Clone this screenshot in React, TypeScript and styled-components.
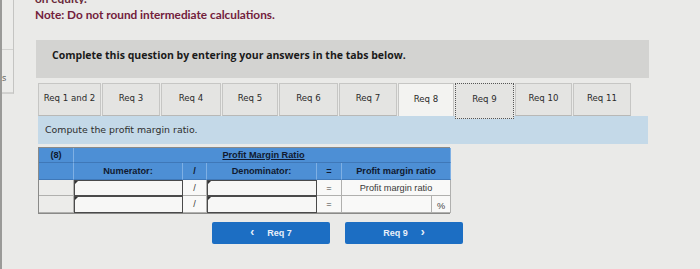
import React from 'react';
import styled, { createGlobalStyle } from 'styled-components';

const GlobalStyle = createGlobalStyle`
  html, body {
    margin: 0;
    padding: 0;
    background: #e9e9e7;
  }
`;

const Page = styled.div`
  display: flex;
  width: 700px;
  height: 269px;
  overflow: hidden;
  background: #eaeae8;
  font-family: "Open Sans", "Liberation Sans", sans-serif;
`;

const Sidebar = styled.div`
  width: 12px;
  flex: none;
  border-left: 2px solid #9a9a98;
  display: flex;
  flex-direction: column;
`;

const SidePanel = styled.div`
  height: 93px;
  border-right: 1px solid #c4c4c2;
  border-bottom: 1px solid #d0d0ce;
  background: #ececea;
  display: flex;
  flex-direction: column;
`;

const SideCell = styled.div<{ $h: number }>`
  height: ${({ $h }) => $h}px;
  border-bottom: 1px solid #d2d2d0;
  font-size: 9px;
  color: #555;
  display: flex;
  align-items: flex-end;
  padding-bottom: 8px;
  box-sizing: border-box;
`;

const Main = styled.div`
  flex: 1;
  padding-left: 21px;
  display: flex;
  flex-direction: column;
`;

const CutLine = styled.div`
  height: 4px;
  overflow: hidden;
  font-family: Lato, sans-serif;
  font-weight: 700;
  font-size: 11.8px;
  color: #6a2a3a;
  line-height: 4px;
  span {
    display: block;
    margin-top: -3px;
  }
`;

const Note = styled.div`
  margin-top: 4px;
  font-family: Lato, sans-serif;
  font-weight: 700;
  font-size: 11.8px;
  color: #72203b;
  line-height: 14px;
`;

const Instruction = styled.div`
  margin-top: 18px;
  margin-left: 1px;
  width: 613px;
  height: 38px;
  background: #d3d3d1;
  box-sizing: border-box;
  padding-left: 16px;
  display: flex;
  align-items: center;
  font-family: "Open Sans", sans-serif;
  font-weight: 700;
  font-size: 10.5px;
  color: #1a1a1a;
  padding-bottom: 9px;
`;

const TabPanel = styled.div`
  margin-top: 5px;
  margin-left: 3px;
  width: 610px;
`;

const TabRow = styled.div`
  display: flex;
  height: 33px;
  align-items: flex-start;
`;

const Tab = styled.div<{ $w: number; $active?: boolean; $focus?: boolean }>`
  width: ${({ $w }) => $w}px;
  height: ${({ $focus }) => ($focus ? 36 : 33)}px;
  box-sizing: border-box;
  margin-right: 1px;
  background: ${({ $active }) => ($active ? '#f3f3f1' : '#e4e4e2')};
  border: ${({ $focus }) => ($focus ? '1px dotted #555' : '1px solid #c6c6c4')};
  border-bottom: ${({ $active, $focus }) =>
    $active ? 'none' : $focus ? '1px dotted #555' : '1px solid #b8b8b6'};
  display: flex;
  align-items: center;
  justify-content: center;
  padding-bottom: ${({ $focus }) => ($focus ? 5 : 3)}px;
  font-family: "DejaVu Sans", Verdana, sans-serif;
  font-size: 8.6px;
  color: #2a2a2a;
  position: relative;
  z-index: ${({ $focus }) => ($focus ? 2 : 1)};
`;

const Prompt = styled.div`
  height: 28px;
  background: #c4d9e8;
  display: flex;
  align-items: center;
  padding-left: 7px;
  font-family: "DejaVu Sans", Verdana, sans-serif;
  font-size: 9.4px;
  color: #2e2e2e;
  padding-bottom: 1px;
  box-sizing: border-box;
`;

const Table = styled.div`
  margin-top: 3px;
  margin-left: 3px;
  width: 412px;
  display: grid;
  grid-template-columns: 35px 109px 24px 110px 25px 109px;
  grid-template-rows: 15px 17px 16px 17px;
  border: 1px solid #8a8a88;
  box-sizing: border-box;
  font-family: "Liberation Sans", Arial, sans-serif;
`;

const Head = styled.div<{ $span?: number }>`
  grid-column: span ${({ $span }) => $span || 1};
  background: #4d8fd5;
  border-right: 1px solid #7fb0e4;
  border-bottom: 1px solid #3f78b8;
  display: flex;
  align-items: center;
  justify-content: center;
  font-size: 9.2px;
  font-weight: 700;
  color: #101a30;
  box-sizing: border-box;
`;

const Title = styled.span`
  text-decoration: underline;
  margin-left: 3px;
`;

const Cell = styled.div<{ $tone?: 'gray' | 'white' }>`
  background: ${({ $tone }) => ($tone === 'white' ? '#f9f9f8' : '#ececea')};
  border-right: 1px solid #b0b0ae;
  border-bottom: 1px solid #b0b0ae;
  display: flex;
  align-items: center;
  justify-content: center;
  font-size: 9.2px;
  color: #3a3a3a;
  box-sizing: border-box;
`;

const Input = styled.div`
  background: #f7f7f6;
  border: 1.5px solid #4a4a4a;
  box-sizing: border-box;
  position: relative;
  &::before {
    content: '';
    position: absolute;
    left: 0;
    top: 0;
    border-left: 3px solid #333;
    border-bottom: 3px solid transparent;
  }
`;

const Percent = styled.div`
  background: #f9f9f8;
  border-right: 1px solid #b0b0ae;
  border-bottom: 1px solid #b0b0ae;
  display: flex;
  justify-content: flex-end;
  box-sizing: border-box;
  span {
    width: 18px;
    border-left: 1px solid #b0b0ae;
    display: flex;
    align-items: flex-end;
    justify-content: center;
    font-size: 9.2px;
    color: #444;
    padding-bottom: 1px;
  }
`;

const Buttons = styled.div`
  display: flex;
  gap: 15px;
  margin-left: 177px;
  margin-top: 8px;
`;

const NavButton = styled.div`
  width: 118px;
  height: 22px;
  background: #1c6ec3;
  border-radius: 2px;
  display: flex;
  align-items: center;
  justify-content: center;
  gap: 13px;
  font-family: "Liberation Sans", Arial, sans-serif;
  font-weight: 700;
  font-size: 9px;
  color: #e8f0fa;
`;

const Chevron = styled.span`
  font-size: 12px;
  font-weight: 700;
  line-height: 12px;
  margin-top: -2px;
`;

const tabs: { label: string; w: number }[] = [
  { label: 'Req 1 and 2', w: 63 },
  { label: 'Req 3', w: 58 },
  { label: 'Req 4', w: 60 },
  { label: 'Req 5', w: 56 },
  { label: 'Req 6', w: 59 },
  { label: 'Req 7', w: 58 },
  { label: 'Req 8', w: 56 },
  { label: 'Req 9', w: 59 },
  { label: 'Req 10', w: 57 },
  { label: 'Req 11', w: 58 },
];

export default function App() {
  return (
    <>
      <GlobalStyle />
      <Page>
        <Sidebar>
          <SidePanel>
            <SideCell $h={50} />
            <SideCell $h={43}>s</SideCell>
          </SidePanel>
        </Sidebar>
        <Main>
          <CutLine>
            <span>on equity.</span>
          </CutLine>
          <Note>Note: Do not round intermediate calculations.</Note>
          <Instruction>Complete this question by entering your answers in the tabs below.</Instruction>
          <TabPanel>
            <TabRow>
              {tabs.map((t) => (
                <Tab
                  key={t.label}
                  $w={t.w}
                  $active={t.label === 'Req 8'}
                  $focus={t.label === 'Req 9'}
                >
                  {t.label}
                </Tab>
              ))}
            </TabRow>
            <Prompt>Compute the profit margin ratio.</Prompt>
          </TabPanel>
          <Table>
            <Head>(8)</Head>
            <Head $span={5}>
              <Title>Profit Margin Ratio</Title>
            </Head>
            <Head />
            <Head>Numerator:</Head>
            <Head>/</Head>
            <Head>Denominator:</Head>
            <Head>=</Head>
            <Head>Profit margin ratio</Head>

            <Cell />
            <Input />
            <Cell $tone="white">/</Cell>
            <Input />
            <Cell $tone="white">=</Cell>
            <Cell $tone="white">Profit margin ratio</Cell>

            <Cell />
            <Input />
            <Cell $tone="white">/</Cell>
            <Input />
            <Cell $tone="white">=</Cell>
            <Percent>
              <span>%</span>
            </Percent>
          </Table>
          <Buttons>
            <NavButton>
              <Chevron>&lsaquo;</Chevron>
              <span>Req 7</span>
            </NavButton>
            <NavButton>
              <span>Req 9</span>
              <Chevron>&rsaquo;</Chevron>
            </NavButton>
          </Buttons>
        </Main>
      </Page>
    </>
  );
}
